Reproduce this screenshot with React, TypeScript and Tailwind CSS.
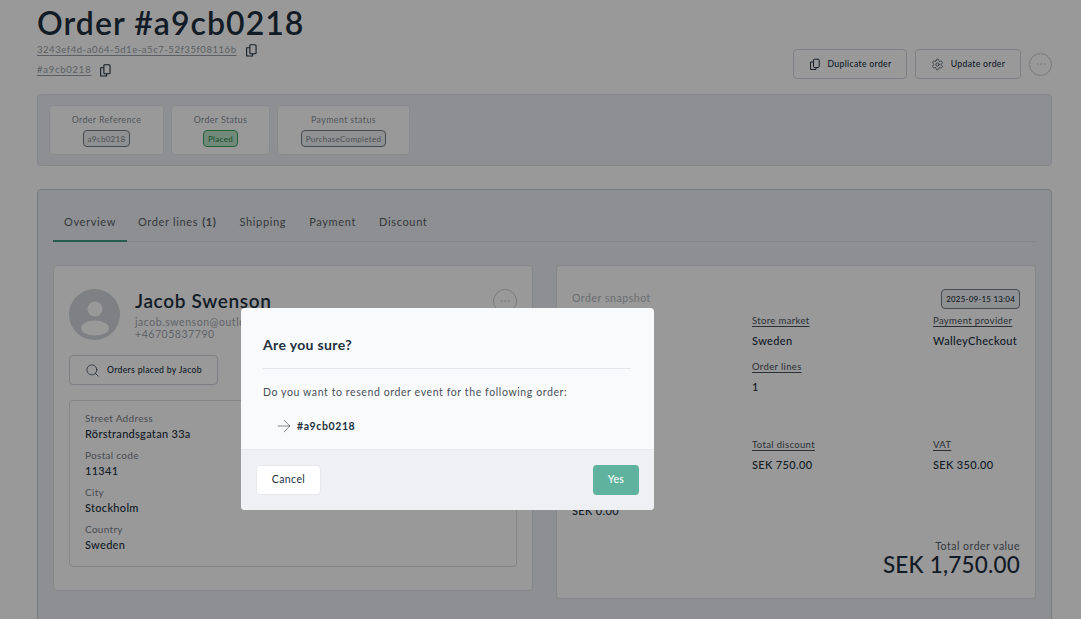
import { ArrowRight, Ellipsis, Search, Settings } from "lucide-react";

const font = { fontFamily: "Lato, 'Noto Sans', sans-serif" };

function CopyIcon({ className }: { className?: string }) {
    return (
        <svg viewBox="0 0 12 12" fill="none" stroke="currentColor" strokeWidth="1" className={className}>
            <path d="M4.5 3.5H1.5V11H7V9" strokeLinejoin="round" />
            <path d="M4.5 1.5C4.5 1 4.8.7 5.3.7H9.2C9.8.7 10.2 1 10.2 1.6V8.2C10.2 8.7 9.8 9 9.3 9H5.3C4.8 9 4.5 8.7 4.5 8.2Z" />
        </svg>
    );
}

function StatCard({ label, value, green, className }: { label: string; value: string; green?: boolean; className: string }) {
    return (
        <div className={`h-[50px] flex flex-col items-center rounded border border-gray-200 bg-white pt-2 ${className}`}>
            <span className="text-[8.8px] leading-[12px] tracking-[0.4px] text-[#8b9097]">{label}</span>
            <span
                className={
                    green
                        ? "mt-1 h-[17px] px-1 flex items-center rounded border border-[#3ba565] bg-[#bfe6cc] text-[8px] font-medium tracking-[0.3px] text-[#2b8a4e]"
                        : "mt-1 h-[17px] px-1 flex items-center rounded border border-[#767b82] bg-[#eef0f3] text-[8px] tracking-[0.3px] text-[#858a91]"
                }
            >
                {value}
            </span>
        </div>
    );
}

function Field({ label, value }: { label: string; value: string }) {
    return (
        <div className="flex flex-col">
            <span className="text-[10px] leading-[13px] tracking-[0.3px] text-[#7b8087]">{label}</span>
            <span className="mt-[1px] text-[11px] leading-[15px] font-medium tracking-[0.3px] text-[#22303e]">{value}</span>
        </div>
    );
}

function SnapField({ label, value }: { label?: string; value?: string }) {
    return (
        <div className="flex flex-col items-start">
            <span className="text-[9.5px] leading-[13px] tracking-[0.35px] underline underline-offset-2 text-[#4a5058]">{label ?? "\u00a0"}</span>
            <span className="mt-[6px] text-[11px] leading-[15px] font-medium tracking-[0.35px] text-[#22303e]">{value ?? "\u00a0"}</span>
        </div>
    );
}

export default function App() {
    return (
        <div style={font} className="relative h-[619px] w-[1081px] overflow-hidden bg-white text-[#22303e]">
            <div className="pl-[37px] pr-[29px] pt-[5px]">
                {/* Header */}
                <div className="flex items-end justify-between">
                    <div>
                        <h1 className="text-[32px] leading-[36px] font-semibold tracking-[1.05px] text-[#1f2f40]">Order #a9cb0218</h1>
                        <div className="mt-[1px] flex items-center gap-2 h-[16px]">
                            <span className="text-[9.5px] tracking-[0.55px] underline underline-offset-2 text-[#9a9fa5]">3243ef4d-a064-5d1e-a5c7-52f35f08116b</span>
                            <CopyIcon className="w-[13px] h-[13px] text-[#1f2f40]" />
                        </div>
                        <div className="mt-[3px] flex items-center gap-2 h-[18px]">
                            <span className="text-[9.5px] tracking-[0.75px] underline underline-offset-2 text-[#9a9fa5]">#a9cb0218</span>
                            <CopyIcon className="w-[13px] h-[13px] text-[#1f2f40]" />
                        </div>
                    </div>
                    <div className="flex items-center">
                        <button className="h-[30px] w-[114px] flex items-center justify-center gap-[7px] rounded border border-gray-300 bg-white text-[8.7px] font-medium tracking-[0.3px]">
                            <CopyIcon className="w-[12px] h-[13px]" />
                            Duplicate order
                        </button>
                        <button className="ml-2 h-[30px] w-[106px] flex items-center justify-center gap-[7px] rounded border border-gray-300 bg-white text-[8.7px] font-medium tracking-[0.3px]">
                            <Settings className="w-[13px] h-[13px]" strokeWidth={1.2} />
                            Update order
                        </button>
                        <span className="ml-2 w-[23px] h-[23px] flex items-center justify-center rounded-full border-[1.5px] border-[#c9ccd0] text-[#c4c7cc]">
                            <Ellipsis className="w-[12px] h-[12px]" strokeWidth={1.2} />
                        </span>
                    </div>
                </div>

                {/* Status strip */}
                <div className="mt-[15px] h-[72px] flex gap-[7px] rounded border border-[#dde0e5] bg-[#eceff3] px-[11px] pt-[10px]">
                    <StatCard label="Order Reference" value="a9cb0218" className="w-[115px]" />
                    <StatCard label="Order Status" value="Placed" green className="w-[99px]" />
                    <StatCard label="Payment status" value="PurchaseCompleted" className="w-[133px]" />
                </div>

                {/* Main panel */}
                <div className="mt-[23px] h-[480px] rounded border border-[#c8cbd0] bg-[#eceff3] px-[15px]">
                    <div className="mt-[14px] h-[38px] flex border-b border-[#dde0e5] text-[11px] tracking-[0.65px] text-[#5a6068]">
                        <span className="w-[74px] h-[38px] flex items-center justify-center border-b-2 border-[#3f9a80]">Overview</span>
                        <span className="ml-[11px] h-[37px] flex items-center gap-1">
                            Order lines <b className="font-bold">(1)</b>
                        </span>
                        <span className="ml-[23px] h-[37px] flex items-center">Shipping</span>
                        <span className="ml-[23px] h-[37px] flex items-center">Payment</span>
                        <span className="ml-[23px] h-[37px] flex items-center">Discount</span>
                    </div>

                    <div className="mt-[23px] flex items-start gap-[23px]">
                        {/* Customer card */}
                        <div className="w-[480px] h-[326px] rounded border border-[#dde0e5] bg-white px-[15px] pt-[23px]">
                            <div className="flex">
                                <svg viewBox="0 0 51 51" className="w-[51px] h-[51px] shrink-0">
                                    <circle cx="25.5" cy="25.5" r="25.5" fill="#d2d5da" />
                                    <circle cx="26" cy="20" r="7.5" fill="#ffffff" />
                                    <ellipse cx="26" cy="39" rx="14" ry="7.5" fill="#ffffff" />
                                </svg>
                                <div className="ml-[15px] flex-1">
                                    <div className="flex items-start justify-between">
                                        <span className="text-[19px] leading-[24px] font-semibold tracking-[0.65px] text-[#1f2f40]">Jacob Swenson</span>
                                        <span className="w-[24px] h-[24px] flex items-center justify-center rounded-full border-[1.5px] border-[#c9ccd0] text-[#c4c7cc]">
                                            <Ellipsis className="w-[12px] h-[12px]" strokeWidth={1.2} />
                                        </span>
                                    </div>
                                    <div className="mt-[3px] text-[10.5px] leading-[12px] tracking-[0.55px] text-[#a3a7ad]">jacob.swenson@outlook.com</div>
                                    <div className="text-[10.5px] leading-[12px] tracking-[0.55px] text-[#a3a7ad]">+46705837790</div>
                                </div>
                            </div>
                            <button className="mt-[15px] w-[149px] h-[30px] flex items-center justify-center gap-[7px] rounded border border-gray-300 bg-white text-[8.7px] font-medium tracking-[0.3px]">
                                <Search className="w-[15px] h-[15px]" strokeWidth={1.1} />
                                Orders placed by Jacob
                            </button>
                            <div className="mt-[15px] h-[167px] flex flex-col gap-[8px] rounded border border-[#dde0e5] px-[15px] pt-[11px]">
                                <Field label="Street Address" value="Rörstrandsgatan 33a" />
                                <Field label="Postal code" value="11341" />
                                <Field label="City" value="Stockholm" />
                                <Field label="Country" value="Sweden" />
                            </div>
                        </div>

                        {/* Snapshot card */}
                        <div className="w-[480px] h-[334px] rounded border border-[#dde0e5] bg-white px-[15px] pt-[23px]">
                            <div className="flex items-center justify-between">
                                <span className="text-[10.5px] tracking-[0.55px] text-[#b4b8bd]">Order snapshot</span>
                                <span className="h-[20px] px-1 flex items-center rounded border border-[#767b82] bg-[#eef0f3] text-[8px] font-medium tracking-[0.2px]">2025-09-15 13:04</span>
                            </div>
                            <div className="mt-[5px] grid grid-cols-[180px_181px_1fr] gap-y-[12px]">
                                <SnapField />
                                <SnapField label="Store market" value="Sweden" />
                                <SnapField label="Payment provider" value="WalleyCheckout" />
                                <SnapField />
                                <SnapField label="Order lines" value="1" />
                            </div>
                            <div className="mt-[20px] text-[10.5px] leading-[15px] tracking-[0.55px] text-[#b4b8bd]">Order summary</div>
                            <div className="mt-[9px] grid grid-cols-[180px_181px_1fr] gap-y-[12px]">
                                <SnapField />
                                <SnapField label="Total discount" value="SEK 750.00" />
                                <SnapField label="VAT" value="SEK 350.00" />
                                <SnapField value="SEK 0.00" />
                            </div>
                            <div className="mt-[21px] flex flex-col items-end">
                                <span className="text-[10.5px] leading-[14px] tracking-[0.5px] text-[#5a6068]">Total order value</span>
                                <span className="text-[22.5px] leading-[24px] tracking-[0.2px] font-medium text-[#1f2f40]">SEK 1,750.00</span>
                            </div>
                        </div>
                    </div>
                </div>
            </div>

            {/* Backdrop + dialog */}
            <div className="absolute inset-0 bg-black/40" />
            <div className="absolute left-[241px] top-[308px] w-[413px] h-[202px] flex flex-col overflow-hidden rounded bg-[#f9fafc]">
                <div className="flex-1 px-[22px]">
                    <div className="h-[61px] pt-[27px] text-[14px] leading-[20px] font-bold tracking-[0.35px] text-[#22303e] border-b border-[#e3e5ea] mr-[1px]">Are you sure?</div>
                    <div className="mt-[16px] text-[10.5px] leading-[15px] tracking-[0.6px] text-[#4a5058]">Do you want to resend order event for the following order:</div>
                    <div className="mt-[16px] ml-[11px] flex items-center gap-[3px] text-[10.5px] leading-[15px] font-bold tracking-[0.6px] text-[#22303e]">
                        <ArrowRight className="w-[20px] h-[20px] text-[#4a5058]" strokeWidth={0.8} />
                        #a9cb0218
                    </div>
                </div>
                <div className="h-[61px] flex items-center justify-between border-t border-[#e6e8ec] bg-[#eff0f4] pl-[15px] pr-[15px]">
                    <button className="w-[65px] h-[30px] rounded border border-[#e6e8ec] bg-white text-[10.5px] tracking-[0.4px] text-[#22303e]">Cancel</button>
                    <button className="w-[46px] h-[30px] rounded bg-[#5fb29d] text-[10.5px] font-medium tracking-[0.3px] text-white">Yes</button>
                </div>
            </div>
        </div>
    );
}
